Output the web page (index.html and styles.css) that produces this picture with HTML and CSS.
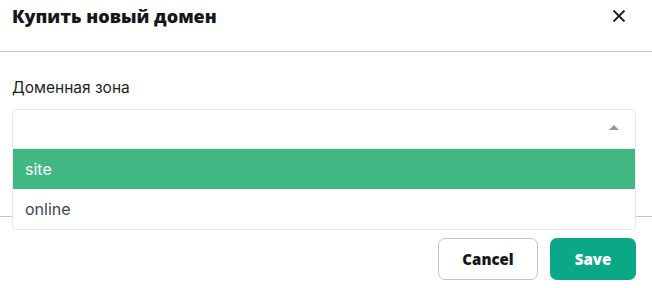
FILE: index.html
```html
<!DOCTYPE html>
<html lang="ru">
<head>
  <meta charset="UTF-8">
  <meta name="viewport" content="width=device-width, initial-scale=1.0">
  <title>Купить новый домен</title>
  <link rel="stylesheet" href="styles.css">
</head>
<body>
  <div class="modal">
    <div class="modal-header">
      <h3 class="modal-title">Купить новый домен</h3>
      <button class="close" type="button" aria-label="Close">
        <svg width="14" height="14" viewBox="0 0 14 14">
          <path d="M1.5 1.5 L12.5 12.5 M12.5 1.5 L1.5 12.5" stroke="#1c1c24" stroke-width="1.8" fill="none"/>
        </svg>
      </button>
    </div>

    <div class="modal-body">
      <label class="field-label">Доменная зона</label>
      <div class="multiselect is-open">
        <div class="multiselect-select"></div>
        <div class="multiselect-tags"></div>
        <ul class="multiselect-content">
          <li class="option highlight">site</li>
          <li class="option">online</li>
        </ul>
      </div>
    </div>

    <div class="modal-footer">
      <button class="btn btn-cancel" type="button">Cancel</button>
      <button class="btn btn-save" type="button">Save</button>
    </div>
  </div>
</body>
</html>
```

FILE: styles.css
```css
body {
  margin: 0;
  font-family: Inter, "Noto Sans", sans-serif;
  background: #fff;
}
.modal {
  width: 652px;
}
.modal-header {
  display: flex;
  align-items: flex-start;
  justify-content: space-between;
  height: 52px;
  padding: 4px 16px 0 12px;
  border-bottom: 1px solid #c8c8c8;
  box-sizing: border-box;
}
.modal-title {
  margin: 0;
  font-family: "Open Sans", sans-serif;
  font-weight: 800;
  font-size: 18px;
  color: #16161d;
}
.close {
  border: 0;
  background: none;
  padding: 0;
  margin: 5px 10px 0 0;
  width: 14px;
  height: 14px;
  cursor: pointer;
}
.modal-body {
  padding: 26px 16px 0 12px;
  height: 164px;
  box-sizing: border-box;
}
.field-label {
  display: block;
  font-size: 15.5px;
  line-height: 20px;
  color: #1e1e24;
  margin-bottom: 11px;
}
.multiselect {
  position: relative;
  height: 40px;
}
.multiselect-tags {
  height: 40px;
  border: 1px solid #e8e8e8;
  border-radius: 5px;
  box-sizing: border-box;
  background: #fff;
}
.multiselect.is-open .multiselect-tags {
  border-bottom-left-radius: 0;
  border-bottom-right-radius: 0;
}
.multiselect-select {
  position: absolute;
  right: 17px;
  top: 16px;
  width: 0;
  height: 0;
  border-left: 5px solid transparent;
  border-right: 5px solid transparent;
  border-bottom: 5px solid #999;
  z-index: 2;
}
.multiselect-content {
  position: absolute;
  top: 40px;
  left: 0;
  right: 0;
  margin: 0;
  padding: 0;
  list-style: none;
  background: #fff;
  border: 1px solid #e8e8e8;
  border-top: 0;
  border-radius: 0 0 5px 5px;
  z-index: 3;
  overflow: hidden;
}
.option {
  height: 40px;
  line-height: 40px;
  padding: 0 12px;
  font-size: 16px;
  color: #35495e;
}
.option.highlight {
  background: #41b883;
  color: #fff;
}
.modal-footer {
  display: flex;
  justify-content: flex-end;
  gap: 12px;
  padding: 21px 16px 0 12px;
  border-top: 1px solid #c8c8c8;
}
.btn {
  height: 42px;
  border-radius: 7px;
  font-family: "Open Sans", sans-serif;
  font-weight: 800;
  font-size: 15px;
  cursor: pointer;
}
.btn-cancel {
  width: 100px;
  background: #fff;
  border: 1px solid #c4c4c4;
  color: #16161d;
}
.btn-save {
  width: 86px;
  background: #0aa886;
  border: 0;
  color: #fff;
}
```
